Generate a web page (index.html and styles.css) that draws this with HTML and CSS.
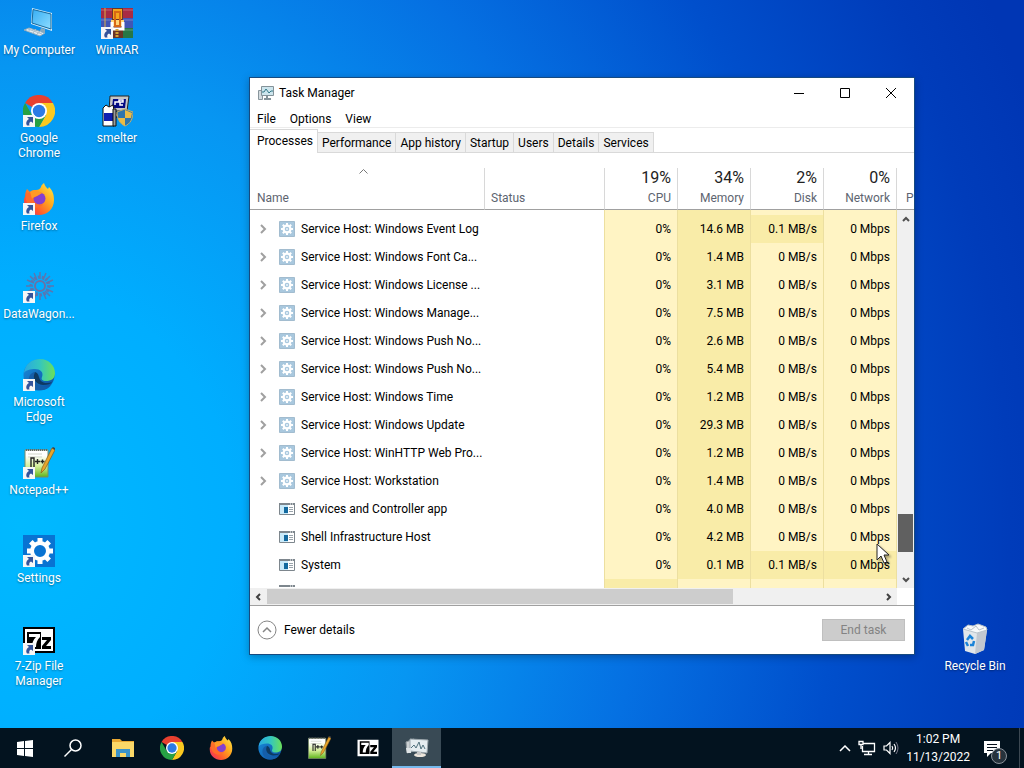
FILE: index.html
```html
<!DOCTYPE html>
<html lang="en">
<head>
<meta charset="utf-8">
<title>Task Manager</title>
<link rel="stylesheet" href="styles.css">
</head>
<body>
<svg class="defs" aria-hidden="true">
  <defs>
    <linearGradient id="edgeTop" x1="0" y1="0" x2="1" y2="0"><stop offset="0" stop-color="#2aa9e0"/><stop offset=".5" stop-color="#33c6c0"/><stop offset="1" stop-color="#6be05a"/></linearGradient>
    <linearGradient id="edgeLow" x1="0" y1="0" x2="1" y2="1"><stop offset="0" stop-color="#1a8fdc"/><stop offset="1" stop-color="#0c4fa0"/></linearGradient>
    <linearGradient id="fox" x1="1" y1="0" x2="0" y2="1"><stop offset="0" stop-color="#fff04a"/><stop offset=".4" stop-color="#ffa51f"/><stop offset=".7" stop-color="#ff5a2c"/><stop offset="1" stop-color="#e8207a"/></linearGradient>
    <linearGradient id="npp" x1="0" y1="0" x2="0" y2="1"><stop offset=".2" stop-color="#fff"/><stop offset=".6" stop-color="#d5ef9a"/><stop offset="1" stop-color="#5fb51c"/></linearGradient>
    <linearGradient id="screen" x1="0" y1="0" x2="1" y2="1"><stop offset="0" stop-color="#36aef4"/><stop offset="1" stop-color="#8edcff"/></linearGradient>
  </defs>
  <symbol id="shortcut" viewBox="0 0 12 12"><path d="M0 0h12v12H0z" fill="#f6f6f6"/><path d="M4 2h6v6L8 6.500C6 7.500 6 9 6.500 10.500H4C2.500 8 3.500 5.500 6 4z" fill="#34549b"/></symbol>
  <symbol id="chrome" viewBox="0 0 32 32"><path d="M16 16 2.100 8A16 16 0 0 1 29.900 8z" fill="#e8402f"/><path d="M29.900 8A16 16 0 0 1 16 32L22.900 20 16 8z" fill="#fbc920"/><path d="M2.100 8A16 16 0 0 0 16 32l6.900-12L16 23 9 20z" fill="#27a144"/><circle cx="16" cy="16" r="8" fill="#fff"/><circle cx="16" cy="16" r="6.200" fill="#2c7be5"/></symbol>
  <symbol id="firefox" viewBox="0 0 32 32"><path d="M2 14C2 10 3 8 4 6l3 3c2-2 4-2 6-2 3 0 4-1 5-3 0-2 2-3 3-4 1 3 2 4 4 6l1-2c4 4 5 8 5 13 0 9-7 15-15 15S1 26 1 18c0-2 0-3 1-4z" fill="url(#fox)"/><circle cx="16.500" cy="15.500" r="6" fill="#8540cf"/><path d="M3 12c3-4 8-4 11-3l5 1-5 3c-3 2-4 1-4 4 1 5 6 6 10 4-3 5-11 5-15 0-2-3-3-6-2-9z" fill="#ff6c2b"/><path d="M7 9c3-2 6-2 8-1l4 2-5 3c-2 1-4 1-5 3-1-3-1-5-2-7z" fill="#ff9a26"/></symbol>
  <symbol id="edge" viewBox="0 0 32 32"><circle cx="16" cy="16" r="15.500" fill="url(#edgeLow)"/><path d="M1 14C2 5 9 0 17 0c9 0 15 7 15 14 0 6-4 8-9 8-4 0-5-2-4-4 2-5-2-8-7-8-5 0-9 1-11 4z" fill="url(#edgeTop)"/><path d="M12 13c-3 6 1 15 10 15 3 0 6-1 7-3-5 8-15 7-20 3-5-5-4-14 3-15z" fill="#155ea9"/><path d="M12 13c-3 6 0 12 8 13 5 0 8-1 9-3-4 2-9 1-11-1-3-3-1-7-6-9z" fill="#0d3a63"/></symbol>
  <symbol id="notepad" viewBox="0 0 32 32"><path d="M2 3h23v27H2z" fill="url(#npp)" stroke="#7a8c68"/><path d="M3 3h21" stroke="#666" stroke-width="2" stroke-dasharray="1 1"/><path d="M5 7h14M5 10h14" stroke="#cfd5c8"/><path d="M8 20v-9h3v9M12 14.500h5m-2.500-2.500v5M17.500 14.500h4m-2-2v4" fill="none" stroke="#222" stroke-width="1.400"/><path d="m18 26 1-5L29 1l3 2-10 19z" fill="#e7a52c" stroke="#875a18" stroke-width=".7"/><path d="m29 1 1-1 2 1v2z" fill="#444"/></symbol>
  <symbol id="sevenzip" viewBox="0 0 32 26"><path d="M0 0h32v26H0z" fill="#000"/><path d="M2 2h28v22H2z" fill="#fff"/><path d="M4 5h14v17H4z" fill="#000"/><path d="M6 7h11v3c-3 3-4 6-4 10H9c0-4 1-7 4-10H6z" fill="#fff"/><path d="M19 10h9v3l-5 6h5v3h-9v-3l5-6h-5z" fill="#000"/></symbol>
  <symbol id="service" viewBox="0 0 16 16"><path d="M.5.5h15v15H.5z" fill="#a9c8de" stroke="#a2bccf"/><path d="M8 2v12M2 8h12M3.800 3.800l8.400 8.400M12.200 3.800l-8.400 8.400" stroke="#fff" stroke-width="2"/><circle cx="8" cy="8" r="3.400" fill="#a9c8de" stroke="#fff" stroke-width="2.200"/><circle cx="8" cy="8" r="1" fill="#eef6fb"/></symbol>
  <symbol id="app" viewBox="0 0 16 12"><path d="M.5.5h15v11H.5z" fill="#fff" stroke="#7d868d"/><path d="M0 0h16v2H0z" fill="#7d868d"/><path d="M1 2h8v9H1z" fill="#c9eafa"/><path d="M5 4h4v6H5z" fill="#12699f"/><path d="M10 4.500h4M10 6.500h4M10 8.500h4" stroke="#9aa4ab"/><path d="M11 1h1m1 0h1" stroke="#fff"/></symbol>
  <symbol id="chevron" viewBox="0 0 8 10"><path d="m2 1 4 4-4 4" fill="none" stroke="#a0a0a0" stroke-width="2"/></symbol>
</svg>

<main class="desktop">
  <ul class="icons">
    <li class="shortcut"><svg class="pic" viewBox="0 0 32 32"><path d="m9 1 20 5v18L8 17z" fill="#d3edfb"/><path d="m10 2.500 18 4.500v15L9 16z" fill="url(#screen)" stroke="#17699c"/><path d="m18 21 4 1v4l-5-2z" fill="#89a9bd"/><path d="m6 21 16 5-5 3L1 23z" fill="#e4ebef" stroke="#8caabd"/><path d="m5 22 14 5M8 21l-3 4m8-3-3 4m8-2-4 3" stroke="#a9bdca"/></svg><span>My Computer</span></li>
    <li class="shortcut"><svg class="pic" viewBox="0 0 32 32"><path d="M0 1h32v10H0z" fill="#a82b43"/><path d="M0 11h32v10H0z" fill="#4155b5"/><path d="M0 21h32v10H0z" fill="#277747"/><path d="M0 3h32M0 13h32M0 23h32" stroke="#ffffff44"/><path d="M4 1v30" stroke="#d9ae45" stroke-width="1"/><path d="M11 1h11v30H11z" fill="#6b3528"/><path d="M12 2h9v10h-9z" fill="#f4a51d"/><path d="M10 13h13v6H10z" fill="#ffd676"/><path d="M14 5h5v14h-5z" fill="none" stroke="#d76814" stroke-width="2"/><path d="M11 15v7h11v-7" fill="none" stroke="#fff" stroke-width="3"/><path d="M16 22v9" stroke="#d3a237" stroke-width="3" stroke-dasharray="2 1"/><use href="#shortcut" y="20" width="12" height="12"/></svg><span>WinRAR</span></li>
    <li class="shortcut"><svg class="pic" viewBox="0 0 32 32"><use href="#chrome"/><use href="#shortcut" y="20" width="12" height="12"/></svg><span>Google Chrome</span></li>
    <li class="shortcut"><svg class="pic" viewBox="0 0 32 32"><path d="M9 1h19l-2 15H8z" fill="#c6c6c6" stroke="#222"/><path d="M12 4h13l-1 9H11z" fill="#040b83"/><path d="M14 10V7h4V5h4v2h-3v3h3" fill="none" stroke="#fff" stroke-width="1.500"/><path d="M13 18h15v4H13z" fill="#ccc" stroke="#111"/><path d="m2 13 3-3 3 2 4-2 1 5v16H2z" fill="#fff" stroke="#111"/><path d="M3 18h9v8H3z" fill="#101faf"/><path d="M12 14h3v17h-3z" fill="#9c9c9c" stroke="#111"/><path d="m24 14 8 3c0 7-3 12-8 14-5-2-8-7-8-14z" fill="#2e75ad" stroke="#c2ae6a"/><path d="m24 15 7 3-1 5h-6zm-7 8h7v8c-4-2-6-5-7-8z" fill="#e9bc47"/></svg><span>smelter</span></li>
    <li class="shortcut"><svg class="pic" viewBox="0 0 32 32"><use href="#firefox"/><use href="#shortcut" y="20" width="12" height="12"/></svg><span>Firefox</span></li>
    <li class="shortcut first"><svg class="pic" viewBox="0 0 32 32"><g fill="none" stroke="#70699f" stroke-width="2" opacity=".8"><circle cx="17" cy="15" r="5" stroke="#846391"/><circle cx="17" cy="15" r="9" stroke-width="3" stroke-dasharray="2 2"/><path d="M17 1v7m0 14v7M3 15h7m14 0h7M7 5l5 5m10 10 5 5M27 5l-5 5M12 20l-5 5M11 2l3 7m6 12 3 7M4 9l7 3m12 6 7 3M30 9l-7 3m-12 6-7 3M23 2l-3 7m-6 12-3 7" stroke-width="1.500"/></g><use href="#shortcut" y="20" width="12" height="12"/></svg><span>DataWagon...</span></li>
    <li class="shortcut first"><svg class="pic" viewBox="0 0 32 32"><use href="#edge"/><use href="#shortcut" y="20" width="12" height="12"/></svg><span>Microsoft Edge</span></li>
    <li class="shortcut first"><svg class="pic" viewBox="0 0 32 32"><use href="#notepad"/><use href="#shortcut" y="20" width="12" height="12"/></svg><span>Notepad++</span></li>
    <li class="shortcut first"><svg class="pic" viewBox="0 0 32 32"><path d="M0 0h32v32H0z" fill="#0873d2"/><path d="M17 3v26M4 16h26M7.800 6.800l18.400 18.400M26.200 6.800 7.800 25.200" stroke="#fff" stroke-width="5"/><circle cx="17" cy="16" r="8" fill="#0873d2" stroke="#fff" stroke-width="4"/><use href="#shortcut" y="20" width="12" height="12"/></svg><span>Settings</span></li>
    <li class="shortcut first"><svg class="pic" viewBox="0 0 32 32"><use href="#sevenzip" y="4" width="32" height="26"/><use href="#shortcut" y="20" width="12" height="12"/></svg><span>7-Zip File Manager</span></li>
  </ul>

  <div class="shortcut bin"><svg class="pic" viewBox="0 0 32 32"><path d="m4 6 24 1-3 20-9 4-10-3z" fill="#e1e6ea"/><path d="m18 10 10-3-3 20-9 4z" fill="#c2c8d0"/><path d="m4 6 5-4 5 1 5-2 8 3 1 3-10 3z" fill="#f7f9fa" stroke="#b9c3cb"/><path d="m8 5 4 2 5-4 3 4 5-2" fill="none" stroke="#b9c3cb"/><path d="m8 17 3-4 3 3m1 2-1 4-3 0m-2 1-2-4" fill="none" stroke="#1b83d8" stroke-width="2.500"/></svg><span>Recycle Bin</span></div>

  <section class="window" aria-label="Task Manager">
    <header class="titlebar">
      <svg class="tm" viewBox="0 0 16 14"><path d="M.5 4.500h4v9h-4z" fill="#d3dbdf" stroke="#89969d"/><path d="M3.500.5h12v9h-12z" fill="#cde5ed" stroke="#849299"/><path d="M4 6h2l2-3 3 4 2-2h2" fill="none" stroke="#327887"/><path d="M9 10v3M6 13h7" stroke="#849299" stroke-width="2"/></svg>
      <h1>Task Manager</h1>
      <div class="controls">
        <button aria-label="Minimize"><svg viewBox="0 0 10 10"><path d="M0 5.500h10" stroke="#000"/></svg></button>
        <button aria-label="Maximize"><svg viewBox="0 0 10 10"><path d="M.5.5h9v9h-9z" fill="none" stroke="#000"/></svg></button>
        <button aria-label="Close"><svg viewBox="0 0 10 10"><path d="m0 0 10 10M10 0 0 10" stroke="#000"/></svg></button>
      </div>
    </header>
    <nav class="menu"><button>File</button><button>Options</button><button>View</button></nav>
    <div class="tabs" role="tablist"><button role="tab" aria-selected="true">Processes</button><button role="tab">Performance</button><button role="tab">App history</button><button role="tab">Startup</button><button role="tab">Users</button><button role="tab">Details</button><button role="tab">Services</button></div>

    <div class="list">
      <table>
        <colgroup><col class="c-name"><col><col class="c-num"><col class="c-num"><col class="c-num"><col class="c-num"><col class="c-end"></colgroup>
        <thead><tr>
          <th><svg class="sort" viewBox="0 0 9 5"><path d="m.5 4.500 4-4 4 4" fill="none" stroke="#777"/></svg>Name</th><th>Status</th>
          <th><b>19%</b>CPU</th><th><b>34%</b>Memory</th><th><b>2%</b>Disk</th><th><b>0%</b>Network</th><th>P</th>
        </tr></thead>
        <tbody>
          <tr class="sliver"><td></td><td></td><td></td><td class="warm"></td><td></td><td></td></tr>
          <tr><td><div class="proc"><svg class="chev"><use href="#chevron"/></svg><svg class="ico"><use href="#service"/></svg>Service Host: Windows Event Log</div></td><td></td><td>0%</td><td class="warm">14.6 MB</td><td class="warm">0.1 MB/s</td><td>0 Mbps</td></tr>
          <tr><td><div class="proc"><svg class="chev"><use href="#chevron"/></svg><svg class="ico"><use href="#service"/></svg>Service Host: Windows Font Ca...</div></td><td></td><td>0%</td><td class="warm">1.4 MB</td><td>0 MB/s</td><td>0 Mbps</td></tr>
          <tr><td><div class="proc"><svg class="chev"><use href="#chevron"/></svg><svg class="ico"><use href="#service"/></svg>Service Host: Windows License ...</div></td><td></td><td>0%</td><td class="warm">3.1 MB</td><td>0 MB/s</td><td>0 Mbps</td></tr>
          <tr><td><div class="proc"><svg class="chev"><use href="#chevron"/></svg><svg class="ico"><use href="#service"/></svg>Service Host: Windows Manage...</div></td><td></td><td>0%</td><td class="warm">7.5 MB</td><td>0 MB/s</td><td>0 Mbps</td></tr>
          <tr><td><div class="proc"><svg class="chev"><use href="#chevron"/></svg><svg class="ico"><use href="#service"/></svg>Service Host: Windows Push No...</div></td><td></td><td>0%</td><td class="warm">2.6 MB</td><td>0 MB/s</td><td>0 Mbps</td></tr>
          <tr><td><div class="proc"><svg class="chev"><use href="#chevron"/></svg><svg class="ico"><use href="#service"/></svg>Service Host: Windows Push No...</div></td><td></td><td>0%</td><td class="warm">5.4 MB</td><td>0 MB/s</td><td>0 Mbps</td></tr>
          <tr><td><div class="proc"><svg class="chev"><use href="#chevron"/></svg><svg class="ico"><use href="#service"/></svg>Service Host: Windows Time</div></td><td></td><td>0%</td><td class="warm">1.2 MB</td><td>0 MB/s</td><td>0 Mbps</td></tr>
          <tr><td><div class="proc"><svg class="chev"><use href="#chevron"/></svg><svg class="ico"><use href="#service"/></svg>Service Host: Windows Update</div></td><td></td><td>0%</td><td class="warm">29.3 MB</td><td>0 MB/s</td><td>0 Mbps</td></tr>
          <tr><td><div class="proc"><svg class="chev"><use href="#chevron"/></svg><svg class="ico"><use href="#service"/></svg>Service Host: WinHTTP Web Pro...</div></td><td></td><td>0%</td><td class="warm">1.2 MB</td><td>0 MB/s</td><td>0 Mbps</td></tr>
          <tr><td><div class="proc"><svg class="chev"><use href="#chevron"/></svg><svg class="ico"><use href="#service"/></svg>Service Host: Workstation</div></td><td></td><td>0%</td><td class="warm">1.4 MB</td><td>0 MB/s</td><td>0 Mbps</td></tr>
          <tr><td><div class="proc"><span class="chev"></span><svg class="ico"><use href="#app" y="2" height="12"/></svg>Services and Controller app</div></td><td></td><td>0%</td><td class="warm">4.0 MB</td><td>0 MB/s</td><td>0 Mbps</td></tr>
          <tr><td><div class="proc"><span class="chev"></span><svg class="ico"><use href="#app" y="2" height="12"/></svg>Shell Infrastructure Host</div></td><td></td><td>0%</td><td class="warm">4.2 MB</td><td>0 MB/s</td><td>0 Mbps</td></tr>
          <tr><td><div class="proc"><span class="chev"></span><svg class="ico"><use href="#app" y="2" height="12"/></svg>System</div></td><td></td><td>0%</td><td class="warm">0.1 MB</td><td class="warm">0.1 MB/s</td><td class="warm">0 Mbps</td></tr>
          <tr class="sliver last"><td><div class="proc"><span class="chev"></span><svg class="edge-ico" viewBox="0 0 16 3"><path d="M0 0h16v2H0z" fill="#7d868d"/><path d="M11 1h1m1 0h1" stroke="#fff"/></svg></div></td><td></td><td class="warm"></td><td></td><td></td><td></td></tr>
        </tbody>
      </table>
      <div class="vscroll">
        <svg viewBox="0 0 8 6"><path d="m1 5 3-3 3 3" fill="none" stroke="#505050" stroke-width="2"/></svg>
        <span class="vthumb"></span>
        <svg viewBox="0 0 8 6"><path d="m1 1 3 3 3-3" fill="none" stroke="#505050" stroke-width="2"/></svg>
      </div>
    </div>
    <div class="hscroll">
      <svg viewBox="0 0 6 8"><path d="M5 1 2 4l3 3" fill="none" stroke="#404040" stroke-width="2"/></svg>
      <div class="htrack"><span class="hthumb"></span></div>
      <svg viewBox="0 0 6 8"><path d="m1 1 3 3-3 3" fill="none" stroke="#404040" stroke-width="2"/></svg>
    </div>
    <footer class="foot">
      <button class="fewer"><svg viewBox="0 0 20 20"><circle cx="10" cy="10" r="9" fill="none" stroke="#858585"/><path d="m6 12 4-4 4 4" fill="none" stroke="#858585" stroke-width="1.500"/></svg>Fewer details</button>
      <button class="end" disabled>End task</button>
    </footer>
  </section>
  <svg class="cursor" viewBox="0 0 14 21"><path d="M1 1v16l4-4 3 7 3-1-3-7h5z" fill="#fff" stroke="#222"/></svg>
</main>

<footer class="taskbar">
  <button aria-label="Start"><svg viewBox="0 0 24 24"><path d="m4 6 7-1v7H4zm8-1 8-1v8h-8zM4 13h7v7l-7-1zm8 0h8v8l-8-1z" fill="#fff"/></svg></button>
  <button aria-label="Search"><svg viewBox="0 0 24 24"><circle cx="13.500" cy="9.500" r="5.500" fill="none" stroke="#fff" stroke-width="1.500"/><path d="m9.500 13.500-7 7" stroke="#fff" stroke-width="1.500"/></svg></button>
  <button aria-label="File Explorer"><svg viewBox="0 0 24 24"><path d="M1 3h8l2 2h12v16H1z" fill="#e9a832"/><path d="M1 6h22v15H1z" fill="#fbd868"/><path d="M5 13h14v8h-4v-4H9v4H5z" fill="#3c93c9"/></svg></button>
  <button aria-label="Google Chrome"><svg viewBox="0 0 32 32"><use href="#chrome"/></svg></button>
  <button aria-label="Firefox"><svg viewBox="0 0 32 32"><use href="#firefox"/></svg></button>
  <button aria-label="Microsoft Edge"><svg viewBox="0 0 32 32"><use href="#edge"/></svg></button>
  <button aria-label="Notepad++"><svg viewBox="0 0 32 32"><use href="#notepad"/></svg></button>
  <button aria-label="7-Zip"><svg viewBox="0 0 32 32"><path d="M2 5h28v22H2z" fill="#fff"/><path d="M5 7h13v17H5z" fill="#000"/><path d="M7 9h10v3c-3 3-4 6-4 10H9c0-4 1-7 4-10H7z" fill="#fff"/><path d="M19 12h9v3l-5 6h5v3h-9v-3l5-6h-5z" fill="#000"/></svg></button>
  <button class="active" aria-label="Task Manager"><svg viewBox="0 0 24 24"><path d="m1 7 8-3v12l-7 2z" fill="#cbd0d3" stroke="#8d969b"/><path d="m5 4 18 1-1 13-17-2z" fill="#e6edf0" stroke="#9ba6ac"/><path d="m6 13 3-3 2 3 3-6 2 7 2-4 2 4" fill="none" stroke="#51717d"/><path d="M1 13h5v5H2z" fill="#dfe4e6"/><ellipse cx="15" cy="20" rx="6" ry="2" fill="#ede6dc"/><path d="M12 17h4v3h-4z" fill="#c8c8c8"/></svg></button>
  <div class="tray">
    <svg class="t-up" viewBox="0 0 12 7"><path d="m1 6 5-5 5 5" fill="none" stroke="#fff" stroke-width="1.500"/></svg>
    <svg class="t-net" viewBox="0 0 18 16"><path d="M5 3.500h11.500v8H4.500V6M10.500 12v2.500M6 14.500h8M1 1.500h4v3H1zM3 5v4" fill="none" stroke="#fff" stroke-width="1.300"/></svg>
    <svg class="t-vol" viewBox="0 0 16 14"><path d="M1 5h2.500L7 1.500v11L3.500 9H1z" fill="none" stroke="#fff" stroke-width="1.200"/><path d="M9 5q1.500 2 0 4m2-6q3 4 0 8" fill="none" stroke="#fff" stroke-width="1.200"/><path d="M13 1q4 6 0 12" fill="none" stroke="#778"/></svg>
    <div class="clock"><span>1:02 PM</span><span>11/13/2022</span></div>
    <div class="note"><svg viewBox="0 0 18 17"><path d="M1 1h16v12H8l-4 4v-4H1z" fill="#fff"/><path d="M4 4.500h10M4 7.500h10M4 10.500h6" stroke="#06101c"/></svg><span class="count">1</span></div>
  </div>
</footer>
</body>
</html>
```
FILE: styles.css
```css
* { box-sizing: border-box; }
body { margin: 0; min-height: 100vh; display: flex; flex-direction: column; font: 12px/16px "Segoe UI", Roboto, "Open Sans", sans-serif; color: #000; overflow: hidden; }
button { font: inherit; color: inherit; border: 0; background: none; padding: 0; margin: 0; }
svg { display: block; flex: none; }
.defs { position: absolute; width: 0; height: 0; }

.desktop { flex: 1; position: relative; background: radial-gradient(ellipse 105% 165% at 2% 72%, #00b9ff 0%, #00aeff 20%, #0796f2 38%, #0570e2 58%, #004fcc 76%, #003cba 92%, #0036b4 100%); }
.icons { list-style: none; margin: 0; padding: 7px 0 0; display: grid; grid-template-columns: 78px 78px; grid-auto-rows: 88px; width: max-content; }
.shortcut { display: flex; flex-direction: column; align-items: center; gap: 4px; width: 78px; color: #fff; line-height: 15px; text-align: center; text-shadow: 0 1px 2px #0006; }
.shortcut.first { grid-column: 1; }
.shortcut span { max-width: 78px; }
.pic { width: 32px; height: 32px; }
.bin { position: absolute; right: 10px; bottom: 54px; }

.window { position: absolute; left: 249px; top: 77px; width: 666px; background: #fff; border: 1px solid #164a80; box-shadow: 0 2px 8px #0004; }
.titlebar { display: flex; align-items: center; height: 30px; padding-left: 8px; gap: 5px; }
.tm { width: 16px; height: 14px; }
.titlebar h1 { font-size: 12px; font-weight: 400; margin: 0; flex: 1; }
.controls { display: flex; }
.controls button { width: 46px; height: 28px; display: grid; place-items: center; }
.controls svg { width: 10px; height: 10px; }
.menu { display: flex; gap: 14px; height: 19px; padding: 2px 7px 0; }
.tabs { display: flex; align-items: flex-end; height: 26px; border-top: 1px solid #ececec; border-bottom: 1px solid #d9d9d9; }
.tabs button { height: 20px; padding: 0 4px; background: #f0f0f0; border: 1px solid #d9d9d9; border-left: 0; border-bottom: 0; }
.tabs button[aria-selected] { height: 24px; padding: 0 4px 2px 7px; background: #fff; margin-bottom: -1px; }

.list { display: grid; grid-template-columns: 1fr 17px; margin-top: 15px; overflow: hidden; }
table { grid-area: 1 / 1 / 2 / 3; width: 100%; table-layout: fixed; border-collapse: separate; border-spacing: 0; white-space: nowrap; }
.c-name { width: 235px; }
.c-num { width: 73px; }
.c-end { width: 17px; }
th { height: 42px; padding: 0 6px 3px; font-weight: 400; color: #5d6470; text-align: left; vertical-align: bottom; border-right: 1px solid #d8d8d8; border-bottom: 1px solid #a0a0a0; overflow: hidden; }
th:first-child { padding-left: 7px; }
th:nth-child(n+3) { text-align: right; }
th:last-child { border-right: 0; padding: 0 0 3px 9px; text-align: left; }
th b { display: block; font-weight: 400; font-size: 16px; line-height: 20px; color: #222; margin-bottom: 2px; }
.sort { width: 9px; height: 5px; margin: 0 auto 16px 102px; }
td { height: 28px; padding: 0 6px; }
td:first-child { padding: 0; }
td:nth-child(n+3) { text-align: right; background: #fff4c4; border-right: 1px solid #ecdfa0; }
td:nth-child(2) { border-right: 1px solid #ecdfa0; }
td.warm:nth-child(n+3) { background: #f9eca8; }
.sliver td { height: 5px; }
.sliver.last td { height: 9px; vertical-align: bottom; }
.proc { display: flex; align-items: center; padding-left: 9px; }
.chev { width: 8px; height: 10px; flex: none; margin-right: 12px; }
.last .chev { height: 2px; }
.ico { width: 16px; height: 16px; margin-right: 6px; }
.edge-ico { width: 16px; height: 3px; }
.vscroll { grid-area: 1 / 2; margin-top: 42px; background: #f0f0f0; display: flex; flex-direction: column; align-items: center; padding: 6px 0 5px; }
.vscroll svg { width: 8px; height: 6px; }
.vthumb { width: 15px; height: 38px; background: #606060; margin: auto 0 25px; }
.hscroll { display: flex; align-items: center; height: 17px; margin-right: 17px; padding: 0 5px; gap: 6px; background: #f0f0f0; }
.hscroll svg { width: 6px; height: 8px; }
.htrack { flex: 1; height: 15px; }
.hthumb { display: block; width: 76%; height: 15px; background: #cdcdcd; }
.foot { display: flex; align-items: center; justify-content: space-between; height: 49px; padding: 0 9px 0 7px; border-top: 1px solid #a0a0a0; }
.fewer { display: flex; align-items: center; gap: 7px; }
.fewer svg { width: 20px; height: 20px; }
.end { width: 83px; height: 22px; background: #ccc; border: 1px solid #bfbfbf; color: #838383; }
.cursor { position: absolute; left: 876px; top: 543px; width: 14px; height: 21px; filter: drop-shadow(2px 2px 1px #0005); }

.taskbar { display: flex; height: 40px; background: #03131f; color: #fff; }
.taskbar button { width: 49px; display: grid; place-items: center; }
.taskbar button svg { width: 24px; height: 24px; }
.taskbar .active { background: #394a55; border-bottom: 2px solid #76b9ed; }
.tray { display: flex; align-items: center; margin: 0 4px 0 auto; padding-right: 18px; gap: 7px; border-right: 1px solid #3c4852; }
.t-up { width: 12px; height: 7px; }
.t-net { width: 18px; height: 16px; }
.t-vol { width: 16px; height: 14px; }
.clock { display: flex; flex-direction: column; align-items: center; line-height: 18px; }
.note { position: relative; margin-left: 6px; }
.note svg { width: 18px; height: 17px; }
.count { position: absolute; left: 8px; top: 8px; width: 16px; height: 16px; border-radius: 8px; background: #26323c; border: 1px solid #8a929a; font-size: 11px; line-height: 14px; text-align: center; }
```
